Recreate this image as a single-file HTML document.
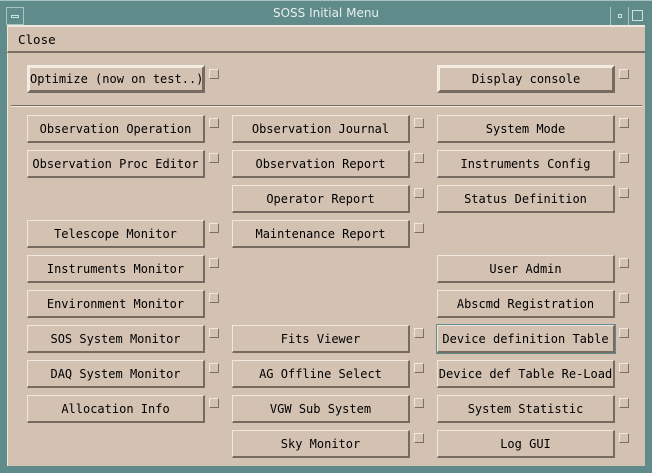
<!DOCTYPE html>
<html><head><meta charset="utf-8"><style>
*{margin:0;padding:0;box-sizing:border-box}
body{width:652px;height:473px;background:#5f8b8a;position:relative;overflow:hidden;font-family:"DejaVu Sans Mono","Liberation Mono",monospace;font-size:12px;color:#000}
.abs{position:absolute}
#title{left:0;top:0;width:652px;height:25px;background:#5f8b8a;border-top:1px solid #a8c4c2;}
#title span{position:absolute;left:0;right:0;top:5px;text-align:center;color:#e8f0ee;font-family:"DejaVu Sans","Liberation Sans",sans-serif;font-size:12px}
#content{left:7px;top:25px;width:638px;height:441px;background:#d3c2b2;border-top:1px solid #efe6dc;border-left:1px solid #efe6dc}
#menu{left:7px;top:25px;width:638px;height:28px;background:#d3c2b2;border-bottom:2px solid #7a6e64;border-top:2px solid #efe6dc;border-left:1px solid #efe6dc}
#menu span{position:absolute;left:10px;top:5px;font-size:12.5px}
.btn{position:absolute;width:178px;height:28px;background:#d3c2b2;border-top:1px solid #f0e8de;border-left:1px solid #f0e8de;border-bottom:2px solid #776b61;border-right:2px solid #776b61;text-align:center;line-height:27px;white-space:nowrap}
.big{border-width:3px;line-height:23px}
.big{border-top-color:#f3ece3;border-left-color:#f3ece3}
.cb{position:absolute;width:10px;height:10px;border-top:1px solid #f0e8de;border-left:1px solid #f0e8de;border-bottom:1px solid #7a6e64;border-right:1px solid #7a6e64}
.hl{outline:1px solid #5f8b8a}
</style></head><body>
<div id="title" class="abs"><span>SOSS Initial Menu</span>
<div class="abs" style="left:6px;top:6px;width:18px;height:18px;border:1px solid #a8c4c2"><div class="abs" style="left:4px;top:7px;width:8px;height:3px;border:1px solid #cfe0de"></div></div>
<div class="abs" style="left:610px;top:6px;width:18px;height:18px;border-left:1px solid #a8c4c2"><div class="abs" style="left:7px;top:7px;width:4px;height:4px;border:1px solid #cfe0de"></div></div>
<div class="abs" style="left:628px;top:6px;width:18px;height:18px;border-left:1px solid #a8c4c2"><div class="abs" style="left:3px;top:3px;width:11px;height:11px;border:1px solid #cfe0de"></div></div>
</div>
<div id="content" class="abs"></div>
<div id="menu" class="abs"><span>Close</span></div>
<div class="abs" style="left:11px;top:105px;width:631px;height:2px;border-top:1px solid #7a6e64;border-bottom:1px solid #f0e8de"></div>

<div class="btn big" style="left:27px;top:65px">Optimize (now on test..)</div><div class="cb" style="left:209px;top:69px"></div>
<div class="btn big" style="left:437px;top:65px">Display console</div><div class="cb" style="left:619px;top:69px"></div>

<div class="btn" style="left:27px;top:115px">Observation Operation</div><div class="cb" style="left:209px;top:118px"></div>
<div class="btn" style="left:232px;top:115px">Observation Journal</div><div class="cb" style="left:414px;top:118px"></div>
<div class="btn" style="left:437px;top:115px">System Mode</div><div class="cb" style="left:619px;top:118px"></div>

<div class="btn" style="left:27px;top:150px">Observation Proc Editor</div><div class="cb" style="left:209px;top:153px"></div>
<div class="btn" style="left:232px;top:150px">Observation Report</div><div class="cb" style="left:414px;top:153px"></div>
<div class="btn" style="left:437px;top:150px">Instruments Config</div><div class="cb" style="left:619px;top:153px"></div>

<div class="btn" style="left:232px;top:185px">Operator Report</div><div class="cb" style="left:414px;top:188px"></div>
<div class="btn" style="left:437px;top:185px">Status Definition</div><div class="cb" style="left:619px;top:188px"></div>

<div class="btn" style="left:27px;top:220px">Telescope Monitor</div><div class="cb" style="left:209px;top:223px"></div>
<div class="btn" style="left:232px;top:220px">Maintenance Report</div><div class="cb" style="left:414px;top:223px"></div>

<div class="btn" style="left:27px;top:255px">Instruments Monitor</div><div class="cb" style="left:209px;top:258px"></div>
<div class="btn" style="left:437px;top:255px">User Admin</div><div class="cb" style="left:619px;top:258px"></div>

<div class="btn" style="left:27px;top:290px">Environment Monitor</div><div class="cb" style="left:209px;top:293px"></div>
<div class="btn" style="left:437px;top:290px">Abscmd Registration</div><div class="cb" style="left:619px;top:293px"></div>

<div class="btn" style="left:27px;top:325px">SOS System Monitor</div><div class="cb" style="left:209px;top:328px"></div>
<div class="btn" style="left:232px;top:325px">Fits Viewer</div><div class="cb" style="left:414px;top:328px"></div>
<div class="btn hl" style="left:437px;top:325px">Device definition Table</div><div class="cb" style="left:619px;top:328px"></div>

<div class="btn" style="left:27px;top:360px">DAQ System Monitor</div><div class="cb" style="left:209px;top:363px"></div>
<div class="btn" style="left:232px;top:360px">AG Offline Select</div><div class="cb" style="left:414px;top:363px"></div>
<div class="btn" style="left:437px;top:360px">Device def Table Re-Load</div><div class="cb" style="left:619px;top:363px"></div>

<div class="btn" style="left:27px;top:395px">Allocation Info</div><div class="cb" style="left:209px;top:398px"></div>
<div class="btn" style="left:232px;top:395px">VGW Sub System</div><div class="cb" style="left:414px;top:398px"></div>
<div class="btn" style="left:437px;top:395px">System Statistic</div><div class="cb" style="left:619px;top:398px"></div>

<div class="btn" style="left:232px;top:430px">Sky Monitor</div><div class="cb" style="left:414px;top:433px"></div>
<div class="btn" style="left:437px;top:430px">Log GUI</div><div class="cb" style="left:619px;top:433px"></div>
</body></html>
